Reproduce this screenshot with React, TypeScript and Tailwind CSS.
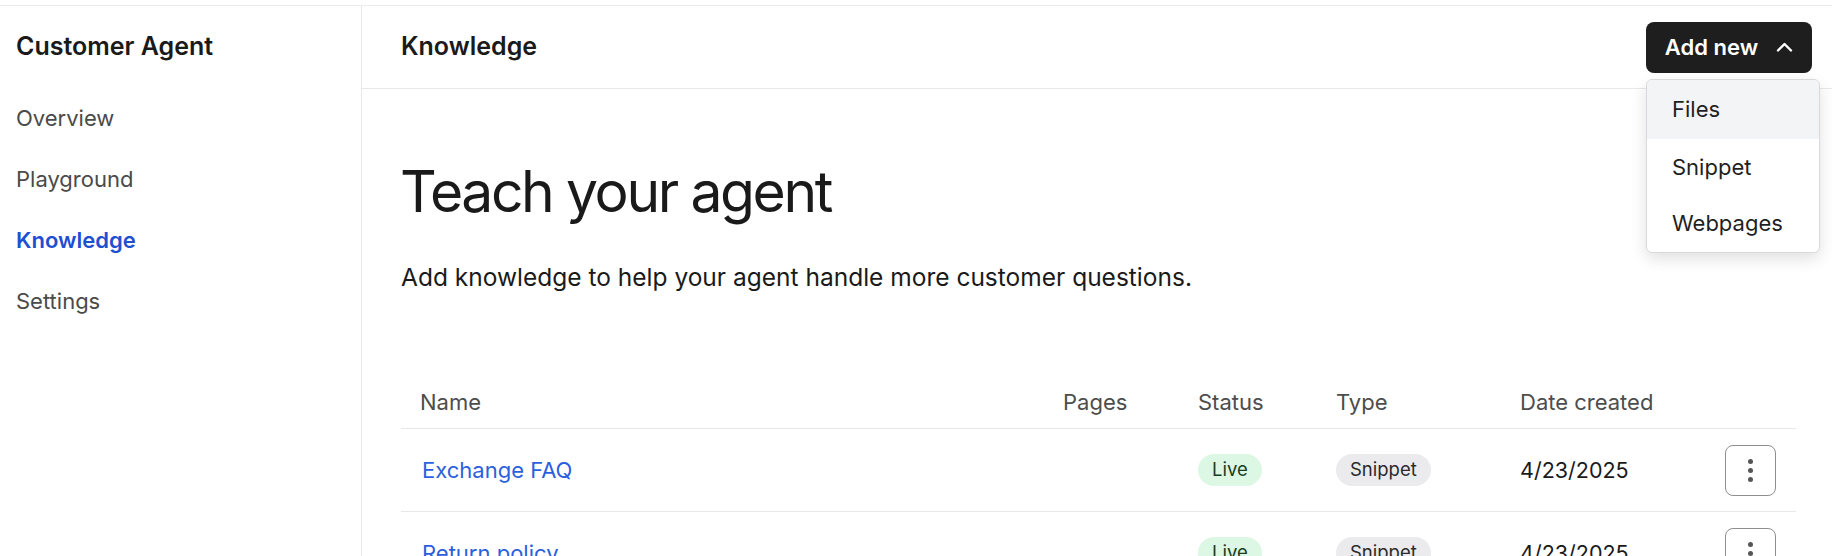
import { useState } from "react";

const navItems = ["Overview", "Playground", "Knowledge", "Settings"];

const rows = [
  { name: "Exchange FAQ", pages: "", status: "Live", type: "Snippet", date: "4/23/2025" },
  { name: "Return policy", pages: "", status: "Live", type: "Snippet", date: "4/23/2025" },
];

function Sidebar() {
  return (
    <aside className="w-[362px] shrink-0 border-r border-[#e8e8e8]">
      <div className="h-[82px] flex items-center px-4 text-[25px] font-semibold text-[#1a1a1a]">
        Customer Agent
      </div>
      <nav className="flex flex-col">
        {navItems.map((item) => (
          <a
            key={item}
            href="#"
            className={
              item === "Knowledge"
                ? "h-[61px] flex items-center px-4 text-[22px] font-semibold text-[#1f4fd1]"
                : "h-[61px] flex items-center px-4 text-[22px] text-[#4a4a4a]"
            }
          >
            {item}
          </a>
        ))}
      </nav>
    </aside>
  );
}

function AddNewMenu() {
  const [open] = useState(true);
  return (
    <div className="relative">
      <button className="h-[51px] w-[166px] rounded-lg bg-[#1e1e1e] text-white text-[22px] font-semibold flex items-center justify-center gap-[18px]">
        Add new
        <svg width="17" height="10" viewBox="0 0 17 10" fill="none">
          <path d="M2 8.5 L8.5 2 L15 8.5" stroke="white" strokeWidth="2.4" strokeLinecap="round" strokeLinejoin="round" />
        </svg>
      </button>
      {open && (
        <div className="absolute left-0 top-[57px] w-[174px] rounded-md border border-[#d8d8dd] bg-white shadow-[0_6px_16px_rgba(0,0,0,0.12)] overflow-hidden z-10">
          <div className="h-[59px] flex items-center px-[25px] bg-[#f3f4f6] text-[22px] text-[#1f1f1f]">Files</div>
          <div className="h-[57px] flex items-center px-[25px] text-[22px] text-[#1f1f1f]">Snippet</div>
          <div className="h-[56px] flex items-center px-[25px] text-[22px] text-[#1f1f1f]">Webpages</div>
        </div>
      )}
    </div>
  );
}

function KebabButton() {
  return (
    <button className="h-[51px] w-[51px] rounded-lg border border-[#8f8f8f] flex flex-col items-center justify-center gap-[4px]">
      <span className="w-[5px] h-[5px] rounded-full bg-[#555]" />
      <span className="w-[5px] h-[5px] rounded-full bg-[#555]" />
      <span className="w-[5px] h-[5px] rounded-full bg-[#555]" />
    </button>
  );
}

function KnowledgeTable() {
  const cols = "grid grid-cols-[643px_135px_138px_184px_205px_90px]";
  return (
    <div className="w-[1395px]">
      <div className={`${cols} h-[53px] items-center border-b border-[#e8e8e8] text-[22px] text-[#4d4d4d]`}>
        <div className="px-[19px]">Name</div>
        <div className="px-[19px]">Pages</div>
        <div className="px-[19px]">Status</div>
        <div className="px-[19px]">Type</div>
        <div className="px-[19px]">Date created</div>
        <div />
      </div>
      {rows.map((row) => (
        <div key={row.name} className={`${cols} h-[83px] items-center border-b border-[#e8e8e8]`}>
          <div className="pl-[21px] pr-[19px] text-[22px] text-[#2b5fde]">{row.name}</div>
          <div className="px-[19px] text-[22px]">{row.pages}</div>
          <div className="px-[19px]">
            <span className="inline-flex h-[32px] items-center rounded-full bg-[#dcf7e3] px-[14px] text-[18.5px] text-[#183d25]">
              {row.status}
            </span>
          </div>
          <div className="px-[19px]">
            <span className="inline-flex h-[32px] items-center rounded-full bg-[#ebebee] px-[14px] text-[18.5px] text-[#2a2a2a]">
              {row.type}
            </span>
          </div>
          <div className="px-[19px] text-[21.5px] text-[#1a1a1a]">{row.date}</div>
          <div className="flex justify-end pr-[20px]">
            <KebabButton />
          </div>
        </div>
      ))}
    </div>
  );
}

export default function App() {
  return (
    <div className="h-[556px] w-full overflow-hidden bg-white pt-[5px] font-['Inter',sans-serif]">
      <div className="flex h-full border-t border-[#ebebeb]">
        <Sidebar />
        <main className="flex-1 min-w-0">
          <header className="h-[83px] flex items-center justify-between border-b border-[#e8e8e8] pl-[39px] pr-[20px]">
            <h1 className="text-[25px] font-semibold text-[#1a1a1a]">Knowledge</h1>
            <AddNewMenu />
          </header>
          <section className="pl-[38px] pr-[36px] pt-[74px]">
            <h2 className="text-[57px] leading-none font-normal text-[#1a1a1a] tracking-[-0.042em]">Teach your agent</h2>
            <p className="mt-[42px] pl-px text-[24.5px] leading-[30px] text-[#1a1a1a]">
              Add knowledge to help your agent handle more customer questions.
            </p>
            <div className="mt-[84px] pl-px">
              <KnowledgeTable />
            </div>
          </section>
        </main>
      </div>
    </div>
  );
}
